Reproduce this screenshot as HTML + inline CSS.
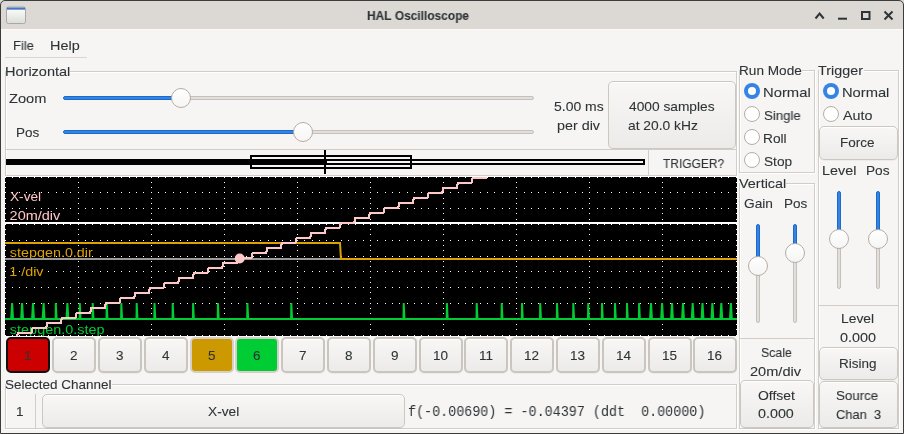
<!DOCTYPE html>
<html><head><meta charset="utf-8"><style>
html,body{margin:0;padding:0;}
body{width:904px;height:434px;position:relative;overflow:hidden;background:#3c3c3c;font-family:'Liberation Sans', sans-serif;}
.t{position:absolute;white-space:pre;transform-origin:0 0;will-change:transform;-webkit-text-stroke:0.1px currentColor;}
.b{position:absolute;}
</style></head><body>
<div class="b" style="left:0px;top:0px;width:904px;height:434px;background:#f6f5f4;"></div><div class="b" style="left:0px;top:0px;width:904px;height:29px;background:#dcd8d4;"></div><div class="b" style="left:0px;top:29px;width:904px;height:1px;background:#fbfaf9;"></div><div class="t" style="left:367.23px;top:10.02px;font-size:12.5px;line-height:12.5px;color:#2e3436;font-family:'Liberation Sans', sans-serif;font-weight:bold;transform:scaleX(0.9536);">HAL&#160;Oscilloscope</div><div class="t" style="left:12.71px;top:39.00px;font-size:13.5px;line-height:13.5px;color:#2e3436;font-family:'Liberation Sans', sans-serif;transform:scaleX(0.9602);">File</div><div class="t" style="left:49.75px;top:39.00px;font-size:13.5px;line-height:13.5px;color:#2e3436;font-family:'Liberation Sans', sans-serif;transform:scaleX(1.0680);">Help</div><div class="b" style="left:5px;top:57px;width:82px;height:1px;background:#dad5d1;"></div><div class="b" style="left:6px;top:72px;width:732px;height:105px;border:1px solid #ffffff;box-sizing:border-box;"></div><div class="b" style="left:5px;top:71px;width:732px;height:105px;border:1px solid #d3cdc8;box-sizing:border-box;"></div><div class="b" style="left:6px;top:69px;width:64px;height:5px;background:#f6f5f4;"></div><div class="t" style="left:4.64px;top:65.00px;font-size:13.5px;line-height:13.5px;color:#2e3436;font-family:'Liberation Sans', sans-serif;transform:scaleX(1.0750);">Horizontal</div><div class="t" style="left:8.66px;top:92.00px;font-size:13.5px;line-height:13.5px;color:#2e3436;font-family:'Liberation Sans', sans-serif;transform:scaleX(1.0818);">Zoom</div><div class="t" style="left:15.74px;top:126.00px;font-size:13.5px;line-height:13.5px;color:#2e3436;font-family:'Liberation Sans', sans-serif;transform:scaleX(0.9846);">Pos</div><div class="b" style="left:63px;top:96px;width:122px;height:4px;background:#3584e4;border:1px solid #1b6acb;border-radius:2px;box-sizing:border-box;"></div><div class="b" style="left:185px;top:96px;width:349px;height:4px;background:#e1dedb;border:1px solid #c6c0ba;border-radius:2px;box-sizing:border-box;"></div><div class="b" style="left:171px;top:88px;width:20px;height:20px;border-radius:50%;background:linear-gradient(#ffffff,#f6f5f4);border:1px solid #b6ada5;box-sizing:border-box;"></div><div class="b" style="left:63px;top:130px;width:244px;height:4px;background:#3584e4;border:1px solid #1b6acb;border-radius:2px;box-sizing:border-box;"></div><div class="b" style="left:307px;top:130px;width:227px;height:4px;background:#e1dedb;border:1px solid #c6c0ba;border-radius:2px;box-sizing:border-box;"></div><div class="b" style="left:293px;top:122px;width:20px;height:20px;border-radius:50%;background:linear-gradient(#ffffff,#f6f5f4);border:1px solid #b6ada5;box-sizing:border-box;"></div><div class="t" style="left:553.84px;top:100.00px;font-size:13.5px;line-height:13.5px;color:#2e3436;font-family:'Liberation Sans', sans-serif;transform:scaleX(1.0345);">5.00&#160;ms</div><div class="t" style="left:556.77px;top:119.00px;font-size:13.5px;line-height:13.5px;color:#2e3436;font-family:'Liberation Sans', sans-serif;transform:scaleX(1.0618);">per&#160;div</div><div class="b" style="left:608px;top:81px;width:128px;height:68px;border:1px solid #cdc7c2;border-radius:5px;box-sizing:border-box;background:linear-gradient(#f8f7f6,#edebe9);box-shadow:inset 0 1px rgba(255,255,255,0.9), 0 1px rgba(0,0,0,0.04);"></div><div class="t" style="left:628.63px;top:100.00px;font-size:13.5px;line-height:13.5px;color:#2e3436;font-family:'Liberation Sans', sans-serif;transform:scaleX(1.0181);">4000&#160;samples</div><div class="t" style="left:628.35px;top:119.00px;font-size:13.5px;line-height:13.5px;color:#2e3436;font-family:'Liberation Sans', sans-serif;transform:scaleX(1.0224);">at&#160;20.0&#160;kHz</div><div class="b" style="left:6px;top:149px;width:730px;height:1px;background:#d3cdc8;"></div><div class="b" style="left:648px;top:150px;width:1px;height:25px;background:#d3cdc8;"></div><div class="t" style="left:662.86px;top:157.00px;font-size:13.5px;line-height:13.5px;color:#2e3436;font-family:'Liberation Sans', sans-serif;transform:scaleX(0.8865);">TRIGGER?</div><div class="b" style="left:6px;top:159px;width:319px;height:6px;background:#000;"></div><div class="b" style="left:325px;top:159px;width:320px;height:6px;border:2px solid #000;box-sizing:border-box;"></div><div class="b" style="left:250px;top:155px;width:162px;height:14px;border:2px solid #000;box-sizing:border-box;"></div><div class="b" style="left:324px;top:150px;width:2px;height:24px;background:#000;"></div><svg class="b" style="left:5px;top:177px;will-change:transform" width="732" height="159" viewBox="0 0 732 159" shape-rendering="crispEdges"><rect width="732" height="159" fill="#000"/><path d="M0 0h1v1h-1zM0 5h1v1h-1zM0 10h1v1h-1zM0 15h1v1h-1zM0 21h1v1h-1zM0 26h1v1h-1zM0 31h1v1h-1zM0 36h1v1h-1zM0 42h1v1h-1zM0 47h1v1h-1zM0 52h1v1h-1zM0 57h1v1h-1zM0 63h1v1h-1zM0 68h1v1h-1zM0 73h1v1h-1zM0 79h1v1h-1zM0 84h1v1h-1zM0 89h1v1h-1zM0 94h1v1h-1zM0 100h1v1h-1zM0 105h1v1h-1zM0 110h1v1h-1zM0 115h1v1h-1zM0 121h1v1h-1zM0 126h1v1h-1zM0 131h1v1h-1zM0 136h1v1h-1zM0 142h1v1h-1zM0 147h1v1h-1zM0 152h1v1h-1zM0 158h1v1h-1zM7 0h1v1h-1zM7 15h1v1h-1zM7 31h1v1h-1zM7 47h1v1h-1zM7 63h1v1h-1zM7 79h1v1h-1zM7 94h1v1h-1zM7 110h1v1h-1zM7 126h1v1h-1zM7 142h1v1h-1zM7 158h1v1h-1zM14 0h1v1h-1zM14 15h1v1h-1zM14 31h1v1h-1zM14 47h1v1h-1zM14 63h1v1h-1zM14 79h1v1h-1zM14 94h1v1h-1zM14 110h1v1h-1zM14 126h1v1h-1zM14 142h1v1h-1zM14 158h1v1h-1zM21 0h1v1h-1zM21 15h1v1h-1zM21 31h1v1h-1zM21 47h1v1h-1zM21 63h1v1h-1zM21 79h1v1h-1zM21 94h1v1h-1zM21 110h1v1h-1zM21 126h1v1h-1zM21 142h1v1h-1zM21 158h1v1h-1zM29 0h1v1h-1zM29 15h1v1h-1zM29 31h1v1h-1zM29 47h1v1h-1zM29 63h1v1h-1zM29 79h1v1h-1zM29 94h1v1h-1zM29 110h1v1h-1zM29 126h1v1h-1zM29 142h1v1h-1zM29 158h1v1h-1zM36 0h1v1h-1zM36 15h1v1h-1zM36 31h1v1h-1zM36 47h1v1h-1zM36 63h1v1h-1zM36 79h1v1h-1zM36 94h1v1h-1zM36 110h1v1h-1zM36 126h1v1h-1zM36 142h1v1h-1zM36 158h1v1h-1zM43 0h1v1h-1zM43 15h1v1h-1zM43 31h1v1h-1zM43 47h1v1h-1zM43 63h1v1h-1zM43 79h1v1h-1zM43 94h1v1h-1zM43 110h1v1h-1zM43 126h1v1h-1zM43 142h1v1h-1zM43 158h1v1h-1zM51 0h1v1h-1zM51 15h1v1h-1zM51 31h1v1h-1zM51 47h1v1h-1zM51 63h1v1h-1zM51 79h1v1h-1zM51 94h1v1h-1zM51 110h1v1h-1zM51 126h1v1h-1zM51 142h1v1h-1zM51 158h1v1h-1zM58 0h1v1h-1zM58 15h1v1h-1zM58 31h1v1h-1zM58 47h1v1h-1zM58 63h1v1h-1zM58 79h1v1h-1zM58 94h1v1h-1zM58 110h1v1h-1zM58 126h1v1h-1zM58 142h1v1h-1zM58 158h1v1h-1zM65 0h1v1h-1zM65 15h1v1h-1zM65 31h1v1h-1zM65 47h1v1h-1zM65 63h1v1h-1zM65 79h1v1h-1zM65 94h1v1h-1zM65 110h1v1h-1zM65 126h1v1h-1zM65 142h1v1h-1zM65 158h1v1h-1zM73 0h1v1h-1zM73 5h1v1h-1zM73 10h1v1h-1zM73 15h1v1h-1zM73 21h1v1h-1zM73 26h1v1h-1zM73 31h1v1h-1zM73 36h1v1h-1zM73 42h1v1h-1zM73 47h1v1h-1zM73 52h1v1h-1zM73 57h1v1h-1zM73 63h1v1h-1zM73 68h1v1h-1zM73 73h1v1h-1zM73 79h1v1h-1zM73 84h1v1h-1zM73 89h1v1h-1zM73 94h1v1h-1zM73 100h1v1h-1zM73 105h1v1h-1zM73 110h1v1h-1zM73 115h1v1h-1zM73 121h1v1h-1zM73 126h1v1h-1zM73 131h1v1h-1zM73 136h1v1h-1zM73 142h1v1h-1zM73 147h1v1h-1zM73 152h1v1h-1zM73 158h1v1h-1zM80 0h1v1h-1zM80 15h1v1h-1zM80 31h1v1h-1zM80 47h1v1h-1zM80 63h1v1h-1zM80 79h1v1h-1zM80 94h1v1h-1zM80 110h1v1h-1zM80 126h1v1h-1zM80 142h1v1h-1zM80 158h1v1h-1zM87 0h1v1h-1zM87 15h1v1h-1zM87 31h1v1h-1zM87 47h1v1h-1zM87 63h1v1h-1zM87 79h1v1h-1zM87 94h1v1h-1zM87 110h1v1h-1zM87 126h1v1h-1zM87 142h1v1h-1zM87 158h1v1h-1zM95 0h1v1h-1zM95 15h1v1h-1zM95 31h1v1h-1zM95 47h1v1h-1zM95 63h1v1h-1zM95 79h1v1h-1zM95 94h1v1h-1zM95 110h1v1h-1zM95 126h1v1h-1zM95 142h1v1h-1zM95 158h1v1h-1zM102 0h1v1h-1zM102 15h1v1h-1zM102 31h1v1h-1zM102 47h1v1h-1zM102 63h1v1h-1zM102 79h1v1h-1zM102 94h1v1h-1zM102 110h1v1h-1zM102 126h1v1h-1zM102 142h1v1h-1zM102 158h1v1h-1zM109 0h1v1h-1zM109 15h1v1h-1zM109 31h1v1h-1zM109 47h1v1h-1zM109 63h1v1h-1zM109 79h1v1h-1zM109 94h1v1h-1zM109 110h1v1h-1zM109 126h1v1h-1zM109 142h1v1h-1zM109 158h1v1h-1zM116 0h1v1h-1zM116 15h1v1h-1zM116 31h1v1h-1zM116 47h1v1h-1zM116 63h1v1h-1zM116 79h1v1h-1zM116 94h1v1h-1zM116 110h1v1h-1zM116 126h1v1h-1zM116 142h1v1h-1zM116 158h1v1h-1zM124 0h1v1h-1zM124 15h1v1h-1zM124 31h1v1h-1zM124 47h1v1h-1zM124 63h1v1h-1zM124 79h1v1h-1zM124 94h1v1h-1zM124 110h1v1h-1zM124 126h1v1h-1zM124 142h1v1h-1zM124 158h1v1h-1zM131 0h1v1h-1zM131 15h1v1h-1zM131 31h1v1h-1zM131 47h1v1h-1zM131 63h1v1h-1zM131 79h1v1h-1zM131 94h1v1h-1zM131 110h1v1h-1zM131 126h1v1h-1zM131 142h1v1h-1zM131 158h1v1h-1zM138 0h1v1h-1zM138 15h1v1h-1zM138 31h1v1h-1zM138 47h1v1h-1zM138 63h1v1h-1zM138 79h1v1h-1zM138 94h1v1h-1zM138 110h1v1h-1zM138 126h1v1h-1zM138 142h1v1h-1zM138 158h1v1h-1zM146 0h1v1h-1zM146 5h1v1h-1zM146 10h1v1h-1zM146 15h1v1h-1zM146 21h1v1h-1zM146 26h1v1h-1zM146 31h1v1h-1zM146 36h1v1h-1zM146 42h1v1h-1zM146 47h1v1h-1zM146 52h1v1h-1zM146 57h1v1h-1zM146 63h1v1h-1zM146 68h1v1h-1zM146 73h1v1h-1zM146 79h1v1h-1zM146 84h1v1h-1zM146 89h1v1h-1zM146 94h1v1h-1zM146 100h1v1h-1zM146 105h1v1h-1zM146 110h1v1h-1zM146 115h1v1h-1zM146 121h1v1h-1zM146 126h1v1h-1zM146 131h1v1h-1zM146 136h1v1h-1zM146 142h1v1h-1zM146 147h1v1h-1zM146 152h1v1h-1zM146 158h1v1h-1zM153 0h1v1h-1zM153 15h1v1h-1zM153 31h1v1h-1zM153 47h1v1h-1zM153 63h1v1h-1zM153 79h1v1h-1zM153 94h1v1h-1zM153 110h1v1h-1zM153 126h1v1h-1zM153 142h1v1h-1zM153 158h1v1h-1zM160 0h1v1h-1zM160 15h1v1h-1zM160 31h1v1h-1zM160 47h1v1h-1zM160 63h1v1h-1zM160 79h1v1h-1zM160 94h1v1h-1zM160 110h1v1h-1zM160 126h1v1h-1zM160 142h1v1h-1zM160 158h1v1h-1zM168 0h1v1h-1zM168 15h1v1h-1zM168 31h1v1h-1zM168 47h1v1h-1zM168 63h1v1h-1zM168 79h1v1h-1zM168 94h1v1h-1zM168 110h1v1h-1zM168 126h1v1h-1zM168 142h1v1h-1zM168 158h1v1h-1zM175 0h1v1h-1zM175 15h1v1h-1zM175 31h1v1h-1zM175 47h1v1h-1zM175 63h1v1h-1zM175 79h1v1h-1zM175 94h1v1h-1zM175 110h1v1h-1zM175 126h1v1h-1zM175 142h1v1h-1zM175 158h1v1h-1zM182 0h1v1h-1zM182 15h1v1h-1zM182 31h1v1h-1zM182 47h1v1h-1zM182 63h1v1h-1zM182 79h1v1h-1zM182 94h1v1h-1zM182 110h1v1h-1zM182 126h1v1h-1zM182 142h1v1h-1zM182 158h1v1h-1zM190 0h1v1h-1zM190 15h1v1h-1zM190 31h1v1h-1zM190 47h1v1h-1zM190 63h1v1h-1zM190 79h1v1h-1zM190 94h1v1h-1zM190 110h1v1h-1zM190 126h1v1h-1zM190 142h1v1h-1zM190 158h1v1h-1zM197 0h1v1h-1zM197 15h1v1h-1zM197 31h1v1h-1zM197 47h1v1h-1zM197 63h1v1h-1zM197 79h1v1h-1zM197 94h1v1h-1zM197 110h1v1h-1zM197 126h1v1h-1zM197 142h1v1h-1zM197 158h1v1h-1zM204 0h1v1h-1zM204 15h1v1h-1zM204 31h1v1h-1zM204 47h1v1h-1zM204 63h1v1h-1zM204 79h1v1h-1zM204 94h1v1h-1zM204 110h1v1h-1zM204 126h1v1h-1zM204 142h1v1h-1zM204 158h1v1h-1zM211 0h1v1h-1zM211 15h1v1h-1zM211 31h1v1h-1zM211 47h1v1h-1zM211 63h1v1h-1zM211 79h1v1h-1zM211 94h1v1h-1zM211 110h1v1h-1zM211 126h1v1h-1zM211 142h1v1h-1zM211 158h1v1h-1zM219 0h1v1h-1zM219 5h1v1h-1zM219 10h1v1h-1zM219 15h1v1h-1zM219 21h1v1h-1zM219 26h1v1h-1zM219 31h1v1h-1zM219 36h1v1h-1zM219 42h1v1h-1zM219 47h1v1h-1zM219 52h1v1h-1zM219 57h1v1h-1zM219 63h1v1h-1zM219 68h1v1h-1zM219 73h1v1h-1zM219 79h1v1h-1zM219 84h1v1h-1zM219 89h1v1h-1zM219 94h1v1h-1zM219 100h1v1h-1zM219 105h1v1h-1zM219 110h1v1h-1zM219 115h1v1h-1zM219 121h1v1h-1zM219 126h1v1h-1zM219 131h1v1h-1zM219 136h1v1h-1zM219 142h1v1h-1zM219 147h1v1h-1zM219 152h1v1h-1zM219 158h1v1h-1zM226 0h1v1h-1zM226 15h1v1h-1zM226 31h1v1h-1zM226 47h1v1h-1zM226 63h1v1h-1zM226 79h1v1h-1zM226 94h1v1h-1zM226 110h1v1h-1zM226 126h1v1h-1zM226 142h1v1h-1zM226 158h1v1h-1zM233 0h1v1h-1zM233 15h1v1h-1zM233 31h1v1h-1zM233 47h1v1h-1zM233 63h1v1h-1zM233 79h1v1h-1zM233 94h1v1h-1zM233 110h1v1h-1zM233 126h1v1h-1zM233 142h1v1h-1zM233 158h1v1h-1zM241 0h1v1h-1zM241 15h1v1h-1zM241 31h1v1h-1zM241 47h1v1h-1zM241 63h1v1h-1zM241 79h1v1h-1zM241 94h1v1h-1zM241 110h1v1h-1zM241 126h1v1h-1zM241 142h1v1h-1zM241 158h1v1h-1zM248 0h1v1h-1zM248 15h1v1h-1zM248 31h1v1h-1zM248 47h1v1h-1zM248 63h1v1h-1zM248 79h1v1h-1zM248 94h1v1h-1zM248 110h1v1h-1zM248 126h1v1h-1zM248 142h1v1h-1zM248 158h1v1h-1zM255 0h1v1h-1zM255 15h1v1h-1zM255 31h1v1h-1zM255 47h1v1h-1zM255 63h1v1h-1zM255 79h1v1h-1zM255 94h1v1h-1zM255 110h1v1h-1zM255 126h1v1h-1zM255 142h1v1h-1zM255 158h1v1h-1zM263 0h1v1h-1zM263 15h1v1h-1zM263 31h1v1h-1zM263 47h1v1h-1zM263 63h1v1h-1zM263 79h1v1h-1zM263 94h1v1h-1zM263 110h1v1h-1zM263 126h1v1h-1zM263 142h1v1h-1zM263 158h1v1h-1zM270 0h1v1h-1zM270 15h1v1h-1zM270 31h1v1h-1zM270 47h1v1h-1zM270 63h1v1h-1zM270 79h1v1h-1zM270 94h1v1h-1zM270 110h1v1h-1zM270 126h1v1h-1zM270 142h1v1h-1zM270 158h1v1h-1zM277 0h1v1h-1zM277 15h1v1h-1zM277 31h1v1h-1zM277 47h1v1h-1zM277 63h1v1h-1zM277 79h1v1h-1zM277 94h1v1h-1zM277 110h1v1h-1zM277 126h1v1h-1zM277 142h1v1h-1zM277 158h1v1h-1zM285 0h1v1h-1zM285 15h1v1h-1zM285 31h1v1h-1zM285 47h1v1h-1zM285 63h1v1h-1zM285 79h1v1h-1zM285 94h1v1h-1zM285 110h1v1h-1zM285 126h1v1h-1zM285 142h1v1h-1zM285 158h1v1h-1zM292 0h1v1h-1zM292 5h1v1h-1zM292 10h1v1h-1zM292 15h1v1h-1zM292 21h1v1h-1zM292 26h1v1h-1zM292 31h1v1h-1zM292 36h1v1h-1zM292 42h1v1h-1zM292 47h1v1h-1zM292 52h1v1h-1zM292 57h1v1h-1zM292 63h1v1h-1zM292 68h1v1h-1zM292 73h1v1h-1zM292 79h1v1h-1zM292 84h1v1h-1zM292 89h1v1h-1zM292 94h1v1h-1zM292 100h1v1h-1zM292 105h1v1h-1zM292 110h1v1h-1zM292 115h1v1h-1zM292 121h1v1h-1zM292 126h1v1h-1zM292 131h1v1h-1zM292 136h1v1h-1zM292 142h1v1h-1zM292 147h1v1h-1zM292 152h1v1h-1zM292 158h1v1h-1zM299 0h1v1h-1zM299 15h1v1h-1zM299 31h1v1h-1zM299 47h1v1h-1zM299 63h1v1h-1zM299 79h1v1h-1zM299 94h1v1h-1zM299 110h1v1h-1zM299 126h1v1h-1zM299 142h1v1h-1zM299 158h1v1h-1zM307 0h1v1h-1zM307 15h1v1h-1zM307 31h1v1h-1zM307 47h1v1h-1zM307 63h1v1h-1zM307 79h1v1h-1zM307 94h1v1h-1zM307 110h1v1h-1zM307 126h1v1h-1zM307 142h1v1h-1zM307 158h1v1h-1zM314 0h1v1h-1zM314 15h1v1h-1zM314 31h1v1h-1zM314 47h1v1h-1zM314 63h1v1h-1zM314 79h1v1h-1zM314 94h1v1h-1zM314 110h1v1h-1zM314 126h1v1h-1zM314 142h1v1h-1zM314 158h1v1h-1zM321 0h1v1h-1zM321 15h1v1h-1zM321 31h1v1h-1zM321 47h1v1h-1zM321 63h1v1h-1zM321 79h1v1h-1zM321 94h1v1h-1zM321 110h1v1h-1zM321 126h1v1h-1zM321 142h1v1h-1zM321 158h1v1h-1zM328 0h1v1h-1zM328 15h1v1h-1zM328 31h1v1h-1zM328 47h1v1h-1zM328 63h1v1h-1zM328 79h1v1h-1zM328 94h1v1h-1zM328 110h1v1h-1zM328 126h1v1h-1zM328 142h1v1h-1zM328 158h1v1h-1zM336 0h1v1h-1zM336 15h1v1h-1zM336 31h1v1h-1zM336 47h1v1h-1zM336 63h1v1h-1zM336 79h1v1h-1zM336 94h1v1h-1zM336 110h1v1h-1zM336 126h1v1h-1zM336 142h1v1h-1zM336 158h1v1h-1zM343 0h1v1h-1zM343 15h1v1h-1zM343 31h1v1h-1zM343 47h1v1h-1zM343 63h1v1h-1zM343 79h1v1h-1zM343 94h1v1h-1zM343 110h1v1h-1zM343 126h1v1h-1zM343 142h1v1h-1zM343 158h1v1h-1zM350 0h1v1h-1zM350 15h1v1h-1zM350 31h1v1h-1zM350 47h1v1h-1zM350 63h1v1h-1zM350 79h1v1h-1zM350 94h1v1h-1zM350 110h1v1h-1zM350 126h1v1h-1zM350 142h1v1h-1zM350 158h1v1h-1zM358 0h1v1h-1zM358 15h1v1h-1zM358 31h1v1h-1zM358 47h1v1h-1zM358 63h1v1h-1zM358 79h1v1h-1zM358 94h1v1h-1zM358 110h1v1h-1zM358 126h1v1h-1zM358 142h1v1h-1zM358 158h1v1h-1zM365 0h1v1h-1zM365 5h1v1h-1zM365 10h1v1h-1zM365 15h1v1h-1zM365 21h1v1h-1zM365 26h1v1h-1zM365 31h1v1h-1zM365 36h1v1h-1zM365 42h1v1h-1zM365 47h1v1h-1zM365 52h1v1h-1zM365 57h1v1h-1zM365 63h1v1h-1zM365 68h1v1h-1zM365 73h1v1h-1zM365 79h1v1h-1zM365 84h1v1h-1zM365 89h1v1h-1zM365 94h1v1h-1zM365 100h1v1h-1zM365 105h1v1h-1zM365 110h1v1h-1zM365 115h1v1h-1zM365 121h1v1h-1zM365 126h1v1h-1zM365 131h1v1h-1zM365 136h1v1h-1zM365 142h1v1h-1zM365 147h1v1h-1zM365 152h1v1h-1zM365 158h1v1h-1zM372 0h1v1h-1zM372 15h1v1h-1zM372 31h1v1h-1zM372 47h1v1h-1zM372 63h1v1h-1zM372 79h1v1h-1zM372 94h1v1h-1zM372 110h1v1h-1zM372 126h1v1h-1zM372 142h1v1h-1zM372 158h1v1h-1zM380 0h1v1h-1zM380 15h1v1h-1zM380 31h1v1h-1zM380 47h1v1h-1zM380 63h1v1h-1zM380 79h1v1h-1zM380 94h1v1h-1zM380 110h1v1h-1zM380 126h1v1h-1zM380 142h1v1h-1zM380 158h1v1h-1zM387 0h1v1h-1zM387 15h1v1h-1zM387 31h1v1h-1zM387 47h1v1h-1zM387 63h1v1h-1zM387 79h1v1h-1zM387 94h1v1h-1zM387 110h1v1h-1zM387 126h1v1h-1zM387 142h1v1h-1zM387 158h1v1h-1zM394 0h1v1h-1zM394 15h1v1h-1zM394 31h1v1h-1zM394 47h1v1h-1zM394 63h1v1h-1zM394 79h1v1h-1zM394 94h1v1h-1zM394 110h1v1h-1zM394 126h1v1h-1zM394 142h1v1h-1zM394 158h1v1h-1zM402 0h1v1h-1zM402 15h1v1h-1zM402 31h1v1h-1zM402 47h1v1h-1zM402 63h1v1h-1zM402 79h1v1h-1zM402 94h1v1h-1zM402 110h1v1h-1zM402 126h1v1h-1zM402 142h1v1h-1zM402 158h1v1h-1zM409 0h1v1h-1zM409 15h1v1h-1zM409 31h1v1h-1zM409 47h1v1h-1zM409 63h1v1h-1zM409 79h1v1h-1zM409 94h1v1h-1zM409 110h1v1h-1zM409 126h1v1h-1zM409 142h1v1h-1zM409 158h1v1h-1zM416 0h1v1h-1zM416 15h1v1h-1zM416 31h1v1h-1zM416 47h1v1h-1zM416 63h1v1h-1zM416 79h1v1h-1zM416 94h1v1h-1zM416 110h1v1h-1zM416 126h1v1h-1zM416 142h1v1h-1zM416 158h1v1h-1zM423 0h1v1h-1zM423 15h1v1h-1zM423 31h1v1h-1zM423 47h1v1h-1zM423 63h1v1h-1zM423 79h1v1h-1zM423 94h1v1h-1zM423 110h1v1h-1zM423 126h1v1h-1zM423 142h1v1h-1zM423 158h1v1h-1zM431 0h1v1h-1zM431 15h1v1h-1zM431 31h1v1h-1zM431 47h1v1h-1zM431 63h1v1h-1zM431 79h1v1h-1zM431 94h1v1h-1zM431 110h1v1h-1zM431 126h1v1h-1zM431 142h1v1h-1zM431 158h1v1h-1zM438 0h1v1h-1zM438 5h1v1h-1zM438 10h1v1h-1zM438 15h1v1h-1zM438 21h1v1h-1zM438 26h1v1h-1zM438 31h1v1h-1zM438 36h1v1h-1zM438 42h1v1h-1zM438 47h1v1h-1zM438 52h1v1h-1zM438 57h1v1h-1zM438 63h1v1h-1zM438 68h1v1h-1zM438 73h1v1h-1zM438 79h1v1h-1zM438 84h1v1h-1zM438 89h1v1h-1zM438 94h1v1h-1zM438 100h1v1h-1zM438 105h1v1h-1zM438 110h1v1h-1zM438 115h1v1h-1zM438 121h1v1h-1zM438 126h1v1h-1zM438 131h1v1h-1zM438 136h1v1h-1zM438 142h1v1h-1zM438 147h1v1h-1zM438 152h1v1h-1zM438 158h1v1h-1zM445 0h1v1h-1zM445 15h1v1h-1zM445 31h1v1h-1zM445 47h1v1h-1zM445 63h1v1h-1zM445 79h1v1h-1zM445 94h1v1h-1zM445 110h1v1h-1zM445 126h1v1h-1zM445 142h1v1h-1zM445 158h1v1h-1zM453 0h1v1h-1zM453 15h1v1h-1zM453 31h1v1h-1zM453 47h1v1h-1zM453 63h1v1h-1zM453 79h1v1h-1zM453 94h1v1h-1zM453 110h1v1h-1zM453 126h1v1h-1zM453 142h1v1h-1zM453 158h1v1h-1zM460 0h1v1h-1zM460 15h1v1h-1zM460 31h1v1h-1zM460 47h1v1h-1zM460 63h1v1h-1zM460 79h1v1h-1zM460 94h1v1h-1zM460 110h1v1h-1zM460 126h1v1h-1zM460 142h1v1h-1zM460 158h1v1h-1zM467 0h1v1h-1zM467 15h1v1h-1zM467 31h1v1h-1zM467 47h1v1h-1zM467 63h1v1h-1zM467 79h1v1h-1zM467 94h1v1h-1zM467 110h1v1h-1zM467 126h1v1h-1zM467 142h1v1h-1zM467 158h1v1h-1zM475 0h1v1h-1zM475 15h1v1h-1zM475 31h1v1h-1zM475 47h1v1h-1zM475 63h1v1h-1zM475 79h1v1h-1zM475 94h1v1h-1zM475 110h1v1h-1zM475 126h1v1h-1zM475 142h1v1h-1zM475 158h1v1h-1zM482 0h1v1h-1zM482 15h1v1h-1zM482 31h1v1h-1zM482 47h1v1h-1zM482 63h1v1h-1zM482 79h1v1h-1zM482 94h1v1h-1zM482 110h1v1h-1zM482 126h1v1h-1zM482 142h1v1h-1zM482 158h1v1h-1zM489 0h1v1h-1zM489 15h1v1h-1zM489 31h1v1h-1zM489 47h1v1h-1zM489 63h1v1h-1zM489 79h1v1h-1zM489 94h1v1h-1zM489 110h1v1h-1zM489 126h1v1h-1zM489 142h1v1h-1zM489 158h1v1h-1zM497 0h1v1h-1zM497 15h1v1h-1zM497 31h1v1h-1zM497 47h1v1h-1zM497 63h1v1h-1zM497 79h1v1h-1zM497 94h1v1h-1zM497 110h1v1h-1zM497 126h1v1h-1zM497 142h1v1h-1zM497 158h1v1h-1zM504 0h1v1h-1zM504 15h1v1h-1zM504 31h1v1h-1zM504 47h1v1h-1zM504 63h1v1h-1zM504 79h1v1h-1zM504 94h1v1h-1zM504 110h1v1h-1zM504 126h1v1h-1zM504 142h1v1h-1zM504 158h1v1h-1zM511 0h1v1h-1zM511 5h1v1h-1zM511 10h1v1h-1zM511 15h1v1h-1zM511 21h1v1h-1zM511 26h1v1h-1zM511 31h1v1h-1zM511 36h1v1h-1zM511 42h1v1h-1zM511 47h1v1h-1zM511 52h1v1h-1zM511 57h1v1h-1zM511 63h1v1h-1zM511 68h1v1h-1zM511 73h1v1h-1zM511 79h1v1h-1zM511 84h1v1h-1zM511 89h1v1h-1zM511 94h1v1h-1zM511 100h1v1h-1zM511 105h1v1h-1zM511 110h1v1h-1zM511 115h1v1h-1zM511 121h1v1h-1zM511 126h1v1h-1zM511 131h1v1h-1zM511 136h1v1h-1zM511 142h1v1h-1zM511 147h1v1h-1zM511 152h1v1h-1zM511 158h1v1h-1zM519 0h1v1h-1zM519 15h1v1h-1zM519 31h1v1h-1zM519 47h1v1h-1zM519 63h1v1h-1zM519 79h1v1h-1zM519 94h1v1h-1zM519 110h1v1h-1zM519 126h1v1h-1zM519 142h1v1h-1zM519 158h1v1h-1zM526 0h1v1h-1zM526 15h1v1h-1zM526 31h1v1h-1zM526 47h1v1h-1zM526 63h1v1h-1zM526 79h1v1h-1zM526 94h1v1h-1zM526 110h1v1h-1zM526 126h1v1h-1zM526 142h1v1h-1zM526 158h1v1h-1zM533 0h1v1h-1zM533 15h1v1h-1zM533 31h1v1h-1zM533 47h1v1h-1zM533 63h1v1h-1zM533 79h1v1h-1zM533 94h1v1h-1zM533 110h1v1h-1zM533 126h1v1h-1zM533 142h1v1h-1zM533 158h1v1h-1zM540 0h1v1h-1zM540 15h1v1h-1zM540 31h1v1h-1zM540 47h1v1h-1zM540 63h1v1h-1zM540 79h1v1h-1zM540 94h1v1h-1zM540 110h1v1h-1zM540 126h1v1h-1zM540 142h1v1h-1zM540 158h1v1h-1zM548 0h1v1h-1zM548 15h1v1h-1zM548 31h1v1h-1zM548 47h1v1h-1zM548 63h1v1h-1zM548 79h1v1h-1zM548 94h1v1h-1zM548 110h1v1h-1zM548 126h1v1h-1zM548 142h1v1h-1zM548 158h1v1h-1zM555 0h1v1h-1zM555 15h1v1h-1zM555 31h1v1h-1zM555 47h1v1h-1zM555 63h1v1h-1zM555 79h1v1h-1zM555 94h1v1h-1zM555 110h1v1h-1zM555 126h1v1h-1zM555 142h1v1h-1zM555 158h1v1h-1zM562 0h1v1h-1zM562 15h1v1h-1zM562 31h1v1h-1zM562 47h1v1h-1zM562 63h1v1h-1zM562 79h1v1h-1zM562 94h1v1h-1zM562 110h1v1h-1zM562 126h1v1h-1zM562 142h1v1h-1zM562 158h1v1h-1zM570 0h1v1h-1zM570 15h1v1h-1zM570 31h1v1h-1zM570 47h1v1h-1zM570 63h1v1h-1zM570 79h1v1h-1zM570 94h1v1h-1zM570 110h1v1h-1zM570 126h1v1h-1zM570 142h1v1h-1zM570 158h1v1h-1zM577 0h1v1h-1zM577 15h1v1h-1zM577 31h1v1h-1zM577 47h1v1h-1zM577 63h1v1h-1zM577 79h1v1h-1zM577 94h1v1h-1zM577 110h1v1h-1zM577 126h1v1h-1zM577 142h1v1h-1zM577 158h1v1h-1zM584 0h1v1h-1zM584 5h1v1h-1zM584 10h1v1h-1zM584 15h1v1h-1zM584 21h1v1h-1zM584 26h1v1h-1zM584 31h1v1h-1zM584 36h1v1h-1zM584 42h1v1h-1zM584 47h1v1h-1zM584 52h1v1h-1zM584 57h1v1h-1zM584 63h1v1h-1zM584 68h1v1h-1zM584 73h1v1h-1zM584 79h1v1h-1zM584 84h1v1h-1zM584 89h1v1h-1zM584 94h1v1h-1zM584 100h1v1h-1zM584 105h1v1h-1zM584 110h1v1h-1zM584 115h1v1h-1zM584 121h1v1h-1zM584 126h1v1h-1zM584 131h1v1h-1zM584 136h1v1h-1zM584 142h1v1h-1zM584 147h1v1h-1zM584 152h1v1h-1zM584 158h1v1h-1zM592 0h1v1h-1zM592 15h1v1h-1zM592 31h1v1h-1zM592 47h1v1h-1zM592 63h1v1h-1zM592 79h1v1h-1zM592 94h1v1h-1zM592 110h1v1h-1zM592 126h1v1h-1zM592 142h1v1h-1zM592 158h1v1h-1zM599 0h1v1h-1zM599 15h1v1h-1zM599 31h1v1h-1zM599 47h1v1h-1zM599 63h1v1h-1zM599 79h1v1h-1zM599 94h1v1h-1zM599 110h1v1h-1zM599 126h1v1h-1zM599 142h1v1h-1zM599 158h1v1h-1zM606 0h1v1h-1zM606 15h1v1h-1zM606 31h1v1h-1zM606 47h1v1h-1zM606 63h1v1h-1zM606 79h1v1h-1zM606 94h1v1h-1zM606 110h1v1h-1zM606 126h1v1h-1zM606 142h1v1h-1zM606 158h1v1h-1zM614 0h1v1h-1zM614 15h1v1h-1zM614 31h1v1h-1zM614 47h1v1h-1zM614 63h1v1h-1zM614 79h1v1h-1zM614 94h1v1h-1zM614 110h1v1h-1zM614 126h1v1h-1zM614 142h1v1h-1zM614 158h1v1h-1zM621 0h1v1h-1zM621 15h1v1h-1zM621 31h1v1h-1zM621 47h1v1h-1zM621 63h1v1h-1zM621 79h1v1h-1zM621 94h1v1h-1zM621 110h1v1h-1zM621 126h1v1h-1zM621 142h1v1h-1zM621 158h1v1h-1zM628 0h1v1h-1zM628 15h1v1h-1zM628 31h1v1h-1zM628 47h1v1h-1zM628 63h1v1h-1zM628 79h1v1h-1zM628 94h1v1h-1zM628 110h1v1h-1zM628 126h1v1h-1zM628 142h1v1h-1zM628 158h1v1h-1zM635 0h1v1h-1zM635 15h1v1h-1zM635 31h1v1h-1zM635 47h1v1h-1zM635 63h1v1h-1zM635 79h1v1h-1zM635 94h1v1h-1zM635 110h1v1h-1zM635 126h1v1h-1zM635 142h1v1h-1zM635 158h1v1h-1zM643 0h1v1h-1zM643 15h1v1h-1zM643 31h1v1h-1zM643 47h1v1h-1zM643 63h1v1h-1zM643 79h1v1h-1zM643 94h1v1h-1zM643 110h1v1h-1zM643 126h1v1h-1zM643 142h1v1h-1zM643 158h1v1h-1zM650 0h1v1h-1zM650 15h1v1h-1zM650 31h1v1h-1zM650 47h1v1h-1zM650 63h1v1h-1zM650 79h1v1h-1zM650 94h1v1h-1zM650 110h1v1h-1zM650 126h1v1h-1zM650 142h1v1h-1zM650 158h1v1h-1zM657 0h1v1h-1zM657 5h1v1h-1zM657 10h1v1h-1zM657 15h1v1h-1zM657 21h1v1h-1zM657 26h1v1h-1zM657 31h1v1h-1zM657 36h1v1h-1zM657 42h1v1h-1zM657 47h1v1h-1zM657 52h1v1h-1zM657 57h1v1h-1zM657 63h1v1h-1zM657 68h1v1h-1zM657 73h1v1h-1zM657 79h1v1h-1zM657 84h1v1h-1zM657 89h1v1h-1zM657 94h1v1h-1zM657 100h1v1h-1zM657 105h1v1h-1zM657 110h1v1h-1zM657 115h1v1h-1zM657 121h1v1h-1zM657 126h1v1h-1zM657 131h1v1h-1zM657 136h1v1h-1zM657 142h1v1h-1zM657 147h1v1h-1zM657 152h1v1h-1zM657 158h1v1h-1zM665 0h1v1h-1zM665 15h1v1h-1zM665 31h1v1h-1zM665 47h1v1h-1zM665 63h1v1h-1zM665 79h1v1h-1zM665 94h1v1h-1zM665 110h1v1h-1zM665 126h1v1h-1zM665 142h1v1h-1zM665 158h1v1h-1zM672 0h1v1h-1zM672 15h1v1h-1zM672 31h1v1h-1zM672 47h1v1h-1zM672 63h1v1h-1zM672 79h1v1h-1zM672 94h1v1h-1zM672 110h1v1h-1zM672 126h1v1h-1zM672 142h1v1h-1zM672 158h1v1h-1zM679 0h1v1h-1zM679 15h1v1h-1zM679 31h1v1h-1zM679 47h1v1h-1zM679 63h1v1h-1zM679 79h1v1h-1zM679 94h1v1h-1zM679 110h1v1h-1zM679 126h1v1h-1zM679 142h1v1h-1zM679 158h1v1h-1zM687 0h1v1h-1zM687 15h1v1h-1zM687 31h1v1h-1zM687 47h1v1h-1zM687 63h1v1h-1zM687 79h1v1h-1zM687 94h1v1h-1zM687 110h1v1h-1zM687 126h1v1h-1zM687 142h1v1h-1zM687 158h1v1h-1zM694 0h1v1h-1zM694 15h1v1h-1zM694 31h1v1h-1zM694 47h1v1h-1zM694 63h1v1h-1zM694 79h1v1h-1zM694 94h1v1h-1zM694 110h1v1h-1zM694 126h1v1h-1zM694 142h1v1h-1zM694 158h1v1h-1zM701 0h1v1h-1zM701 15h1v1h-1zM701 31h1v1h-1zM701 47h1v1h-1zM701 63h1v1h-1zM701 79h1v1h-1zM701 94h1v1h-1zM701 110h1v1h-1zM701 126h1v1h-1zM701 142h1v1h-1zM701 158h1v1h-1zM709 0h1v1h-1zM709 15h1v1h-1zM709 31h1v1h-1zM709 47h1v1h-1zM709 63h1v1h-1zM709 79h1v1h-1zM709 94h1v1h-1zM709 110h1v1h-1zM709 126h1v1h-1zM709 142h1v1h-1zM709 158h1v1h-1zM716 0h1v1h-1zM716 15h1v1h-1zM716 31h1v1h-1zM716 47h1v1h-1zM716 63h1v1h-1zM716 79h1v1h-1zM716 94h1v1h-1zM716 110h1v1h-1zM716 126h1v1h-1zM716 142h1v1h-1zM716 158h1v1h-1zM723 0h1v1h-1zM723 15h1v1h-1zM723 31h1v1h-1zM723 47h1v1h-1zM723 63h1v1h-1zM723 79h1v1h-1zM723 94h1v1h-1zM723 110h1v1h-1zM723 126h1v1h-1zM723 142h1v1h-1zM723 158h1v1h-1zM731 0h1v1h-1zM731 5h1v1h-1zM731 10h1v1h-1zM731 15h1v1h-1zM731 21h1v1h-1zM731 26h1v1h-1zM731 31h1v1h-1zM731 36h1v1h-1zM731 42h1v1h-1zM731 47h1v1h-1zM731 52h1v1h-1zM731 57h1v1h-1zM731 63h1v1h-1zM731 68h1v1h-1zM731 73h1v1h-1zM731 79h1v1h-1zM731 84h1v1h-1zM731 89h1v1h-1zM731 94h1v1h-1zM731 100h1v1h-1zM731 105h1v1h-1zM731 110h1v1h-1zM731 115h1v1h-1zM731 121h1v1h-1zM731 126h1v1h-1zM731 131h1v1h-1zM731 136h1v1h-1zM731 142h1v1h-1zM731 147h1v1h-1zM731 152h1v1h-1zM731 158h1v1h-1z" fill="#fff"/><text x="0" y="0" transform="translate(4.96 23.80) scale(1.0136 1)" fill="#ffc8c8" font-family="Liberation Sans" font-size="13.5" shape-rendering="auto">X-vel</text><text x="0" y="0" transform="translate(4.57 42.60) scale(1.0751 1)" fill="#ffc8c8" font-family="Liberation Sans" font-size="13.5" shape-rendering="auto">20m/div</text><text x="0" y="0" transform="translate(4.87 79.60) scale(1.0630 1)" fill="#dca000" font-family="Liberation Sans" font-size="13.5" shape-rendering="auto">stepgen.0.dir</text><text x="0" y="0" transform="translate(4.22 98.90) scale(1.0646 1)" fill="#dca000" font-family="Liberation Sans" font-size="13.5" shape-rendering="auto">1&#160;/div</text><text x="0" y="0" transform="translate(4.87 156.90) scale(1.0695 1)" fill="#00cc33" font-family="Liberation Sans" font-size="13.5" shape-rendering="auto">stepgen.0.step</text><rect x="0" y="45" width="732" height="2" fill="#fff"/><rect x="0" y="81" width="335" height="2" fill="#999"/><path d="M0 66 H335 L336 82 H732" stroke="#dca000" stroke-width="2" fill="none" shape-rendering="auto"/><rect x="0" y="141" width="732" height="2" fill="#00cc33"/><path d="M5.1 143 L6.1 126 L8.1 126 L9.1 143 Z M15.1 143 L16.1 126 L18.1 126 L19.1 143 Z M26.0 143 L27.0 126 L29.0 126 L30.0 143 Z M36.6 143 L37.6 126 L39.6 126 L40.6 143 Z M49.6 143 L49.8 126 L51.8 126 L52.6 143 Z M60.4 143 L61.4 126 L63.4 126 L64.4 143 Z M73.6 143 L73.8 126 L75.8 126 L76.6 143 Z M86.5 143 L86.7 126 L88.7 126 L89.5 143 Z M100.5 143 L100.7 126 L102.7 126 L103.5 143 Z M115.1 143 L115.3 126 L117.3 126 L118.1 143 Z M130.5 143 L130.7 126 L132.7 126 L133.5 143 Z M148.3 143 L148.5 126 L150.5 126 L151.3 143 Z M166.5 143 L166.7 126 L168.7 126 L169.5 143 Z M186.9 143 L187.1 126 L189.1 126 L189.9 143 Z M211.7 143 L211.9 126 L213.9 126 L214.7 143 Z M241.2 143 L241.4 126 L243.4 126 L244.2 143 Z M285.1 143 L285.3 126 L287.3 126 L288.1 143 Z M397.5 143 L397.7 126 L399.7 126 L400.5 143 Z M440.7 143 L440.9 126 L442.9 126 L443.7 143 Z M470.5 143 L470.7 126 L472.7 126 L473.5 143 Z M495.5 143 L495.7 126 L497.7 126 L498.5 143 Z M515.8 143 L516.0 126 L518.0 126 L518.8 143 Z M534.0 143 L534.2 126 L536.2 126 L537.0 143 Z M550.8 143 L551.0 126 L553.0 126 L553.8 143 Z M567.1 143 L567.3 126 L569.3 126 L570.1 143 Z M582.0 143 L582.2 126 L584.2 126 L585.0 143 Z M595.8 143 L596.0 126 L598.0 126 L598.8 143 Z M608.8 143 L609.0 126 L611.0 126 L611.8 143 Z M620.8 143 L621.0 126 L623.0 126 L623.8 143 Z M632.9 143 L633.1 126 L635.1 126 L635.9 143 Z M644.0 143 L645.0 126 L647.0 126 L648.0 143 Z M655.1 143 L656.1 126 L658.1 126 L659.1 143 Z M665.0 143 L666.0 126 L668.0 126 L669.0 143 Z M676.0 143 L677.0 126 L679.0 126 L680.0 143 Z M685.7 143 L686.7 126 L688.7 126 L689.7 143 Z M695.5 143 L696.5 126 L698.5 126 L699.5 143 Z M705.4 143 L706.4 126 L708.4 126 L709.4 143 Z M714.3 143 L715.3 126 L717.3 126 L718.3 143 Z M723.9 143 L724.9 126 L726.9 126 L727.9 143 Z " fill="#00cc33" shape-rendering="auto"/><path d="M-7.7 161 L11.8 161 L12.8 156 L26.5 156 L27.5 151 L41.2 151 L42.2 146 L55.8 146 L56.8 141 L70.5 141 L71.5 136 L85.2 136 L86.2 131 L99.8 131 L100.8 126 L114.5 126 L115.5 121 L129.2 121 L130.2 116 L143.8 116 L144.8 111 L158.5 111 L159.5 106 L173.2 106 L174.2 101 L187.8 101 L188.8 96 L202.5 96 L203.5 91 L217.2 91 L218.2 86 L231.8 86 L232.8 81 L246.5 81 L247.5 76 L261.2 76 L262.2 71 L275.8 71 L276.8 66 L290.5 66 L291.5 61 L305.2 61 L306.2 56 L319.8 56 L320.8 51 L334.5 51 L335.5 46 L349.2 46 L350.2 41 L363.8 41 L364.8 36 L378.5 36 L379.5 31 L393.2 31 L394.2 26 L407.8 26 L408.8 21 L422.5 21 L423.5 16 L437.2 16 L438.2 11 L451.8 11 L452.8 6 L466.5 6 L467.5 1 L481.2 1 L482.2 -4 L495.8 -4 L496.8 -9 " stroke="#ffc8c8" stroke-width="2" fill="none"/><circle cx="234.7" cy="81.5" r="5" fill="#ffc8c8" shape-rendering="auto"/></svg><div class="b" style="left:6px;top:337px;width:44px;height:36px;border:2px solid #111;border-radius:5px;box-sizing:border-box;background:#cc0000;"></div><div class="t" style="left:24.05px;top:349.00px;font-size:13.5px;line-height:13.5px;color:#2e3436;font-family:'Liberation Sans', sans-serif;">1</div><div class="b" style="left:52px;top:337px;width:44px;height:36px;border:2px solid #cbc5bf;border-radius:5px;box-sizing:border-box;background:linear-gradient(#f8f7f6,#edebe9);box-shadow:inset 0 1px rgba(255,255,255,0.9), 0 1px rgba(0,0,0,0.04);"></div><div class="t" style="left:70.25px;top:349.00px;font-size:13.5px;line-height:13.5px;color:#2e3436;font-family:'Liberation Sans', sans-serif;">2</div><div class="b" style="left:98px;top:337px;width:44px;height:36px;border:2px solid #cbc5bf;border-radius:5px;box-sizing:border-box;background:linear-gradient(#f8f7f6,#edebe9);box-shadow:inset 0 1px rgba(255,255,255,0.9), 0 1px rgba(0,0,0,0.04);"></div><div class="t" style="left:116.25px;top:349.00px;font-size:13.5px;line-height:13.5px;color:#2e3436;font-family:'Liberation Sans', sans-serif;">3</div><div class="b" style="left:144px;top:337px;width:44px;height:36px;border:2px solid #cbc5bf;border-radius:5px;box-sizing:border-box;background:linear-gradient(#f8f7f6,#edebe9);box-shadow:inset 0 1px rgba(255,255,255,0.9), 0 1px rgba(0,0,0,0.04);"></div><div class="t" style="left:162.32px;top:349.00px;font-size:13.5px;line-height:13.5px;color:#2e3436;font-family:'Liberation Sans', sans-serif;">4</div><div class="b" style="left:190px;top:337px;width:44px;height:36px;border:2px solid #d6cfc9;border-radius:5px;box-sizing:border-box;background:#cc9900;"></div><div class="t" style="left:208.25px;top:349.00px;font-size:13.5px;line-height:13.5px;color:#2e3436;font-family:'Liberation Sans', sans-serif;">5</div><div class="b" style="left:235px;top:337px;width:44px;height:36px;border:2px solid #d6cfc9;border-radius:5px;box-sizing:border-box;background:#00cc33;"></div><div class="t" style="left:253.19px;top:349.00px;font-size:13.5px;line-height:13.5px;color:#2e3436;font-family:'Liberation Sans', sans-serif;">6</div><div class="b" style="left:281px;top:337px;width:44px;height:36px;border:2px solid #cbc5bf;border-radius:5px;box-sizing:border-box;background:linear-gradient(#f8f7f6,#edebe9);box-shadow:inset 0 1px rgba(255,255,255,0.9), 0 1px rgba(0,0,0,0.04);"></div><div class="t" style="left:299.25px;top:349.00px;font-size:13.5px;line-height:13.5px;color:#2e3436;font-family:'Liberation Sans', sans-serif;">7</div><div class="b" style="left:327px;top:337px;width:44px;height:36px;border:2px solid #cbc5bf;border-radius:5px;box-sizing:border-box;background:linear-gradient(#f8f7f6,#edebe9);box-shadow:inset 0 1px rgba(255,255,255,0.9), 0 1px rgba(0,0,0,0.04);"></div><div class="t" style="left:345.22px;top:349.00px;font-size:13.5px;line-height:13.5px;color:#2e3436;font-family:'Liberation Sans', sans-serif;">8</div><div class="b" style="left:373px;top:337px;width:44px;height:36px;border:2px solid #cbc5bf;border-radius:5px;box-sizing:border-box;background:linear-gradient(#f8f7f6,#edebe9);box-shadow:inset 0 1px rgba(255,255,255,0.9), 0 1px rgba(0,0,0,0.04);"></div><div class="t" style="left:391.25px;top:349.00px;font-size:13.5px;line-height:13.5px;color:#2e3436;font-family:'Liberation Sans', sans-serif;">9</div><div class="b" style="left:419px;top:337px;width:44px;height:36px;border:2px solid #cbc5bf;border-radius:5px;box-sizing:border-box;background:linear-gradient(#f8f7f6,#edebe9);box-shadow:inset 0 1px rgba(255,255,255,0.9), 0 1px rgba(0,0,0,0.04);"></div><div class="t" style="left:433.24px;top:349.00px;font-size:13.5px;line-height:13.5px;color:#2e3436;font-family:'Liberation Sans', sans-serif;">10</div><div class="b" style="left:464px;top:337px;width:44px;height:36px;border:2px solid #cbc5bf;border-radius:5px;box-sizing:border-box;background:linear-gradient(#f8f7f6,#edebe9);box-shadow:inset 0 1px rgba(255,255,255,0.9), 0 1px rgba(0,0,0,0.04);"></div><div class="t" style="left:478.81px;top:349.00px;font-size:13.5px;line-height:13.5px;color:#2e3436;font-family:'Liberation Sans', sans-serif;">11</div><div class="b" style="left:510px;top:337px;width:44px;height:36px;border:2px solid #cbc5bf;border-radius:5px;box-sizing:border-box;background:linear-gradient(#f8f7f6,#edebe9);box-shadow:inset 0 1px rgba(255,255,255,0.9), 0 1px rgba(0,0,0,0.04);"></div><div class="t" style="left:524.34px;top:349.00px;font-size:13.5px;line-height:13.5px;color:#2e3436;font-family:'Liberation Sans', sans-serif;">12</div><div class="b" style="left:556px;top:337px;width:44px;height:36px;border:2px solid #cbc5bf;border-radius:5px;box-sizing:border-box;background:linear-gradient(#f8f7f6,#edebe9);box-shadow:inset 0 1px rgba(255,255,255,0.9), 0 1px rgba(0,0,0,0.04);"></div><div class="t" style="left:570.27px;top:349.00px;font-size:13.5px;line-height:13.5px;color:#2e3436;font-family:'Liberation Sans', sans-serif;">13</div><div class="b" style="left:602px;top:337px;width:44px;height:36px;border:2px solid #cbc5bf;border-radius:5px;box-sizing:border-box;background:linear-gradient(#f8f7f6,#edebe9);box-shadow:inset 0 1px rgba(255,255,255,0.9), 0 1px rgba(0,0,0,0.04);"></div><div class="t" style="left:616.20px;top:349.00px;font-size:13.5px;line-height:13.5px;color:#2e3436;font-family:'Liberation Sans', sans-serif;">14</div><div class="b" style="left:648px;top:337px;width:44px;height:36px;border:2px solid #cbc5bf;border-radius:5px;box-sizing:border-box;background:linear-gradient(#f8f7f6,#edebe9);box-shadow:inset 0 1px rgba(255,255,255,0.9), 0 1px rgba(0,0,0,0.04);"></div><div class="t" style="left:662.27px;top:349.00px;font-size:13.5px;line-height:13.5px;color:#2e3436;font-family:'Liberation Sans', sans-serif;">15</div><div class="b" style="left:693px;top:337px;width:44px;height:36px;border:2px solid #cbc5bf;border-radius:5px;box-sizing:border-box;background:linear-gradient(#f8f7f6,#edebe9);box-shadow:inset 0 1px rgba(255,255,255,0.9), 0 1px rgba(0,0,0,0.04);"></div><div class="t" style="left:707.27px;top:349.00px;font-size:13.5px;line-height:13.5px;color:#2e3436;font-family:'Liberation Sans', sans-serif;">16</div><div class="b" style="left:6px;top:385px;width:732px;height:45px;border:1px solid #ffffff;box-sizing:border-box;"></div><div class="b" style="left:5px;top:384px;width:732px;height:45px;border:1px solid #d3cdc8;box-sizing:border-box;"></div><div class="b" style="left:6px;top:382px;width:105.6px;height:5px;background:#f6f5f4;"></div><div class="t" style="left:4.89px;top:378.00px;font-size:13.5px;line-height:13.5px;color:#2e3436;font-family:'Liberation Sans', sans-serif;">Selected&#160;Channel</div><div class="t" style="left:15.95px;top:405.00px;font-size:13.5px;line-height:13.5px;color:#2e3436;font-family:'Liberation Sans', sans-serif;">1</div><div class="b" style="left:35px;top:394px;width:1px;height:34px;background:#d3cdc8;"></div><div class="b" style="left:42px;top:394px;width:363px;height:34px;border:1px solid #cdc7c2;border-radius:5px;box-sizing:border-box;background:linear-gradient(#f8f7f6,#edebe9);box-shadow:inset 0 1px rgba(255,255,255,0.9), 0 1px rgba(0,0,0,0.04);"></div><div class="t" style="left:207.66px;top:405.00px;font-size:13.5px;line-height:13.5px;color:#2e3436;font-family:'Liberation Sans', sans-serif;transform:scaleX(1.0170);">X-vel</div><div class="t" style="left:408.33px;top:405.15px;font-size:14px;line-height:14px;color:#2e3436;font-family:'Liberation Mono', monospace;-webkit-text-stroke:0;transform:scaleX(0.9566);">f(-0.00690)&#160;=&#160;-0.04397&#160;(ddt&#160;&#160;0.00000)</div><div class="b" style="left:740px;top:71px;width:76px;height:103px;border:1px solid #ffffff;box-sizing:border-box;"></div><div class="b" style="left:739px;top:70px;width:76px;height:103px;border:1px solid #d3cdc8;box-sizing:border-box;"></div><div class="b" style="left:740px;top:68px;width:62px;height:5px;background:#f6f5f4;"></div><div class="t" style="left:738.81px;top:64.00px;font-size:13.5px;line-height:13.5px;color:#2e3436;font-family:'Liberation Sans', sans-serif;transform:scaleX(1.0080);">Run&#160;Mode</div><div class="b" style="left:744px;top:83px;width:16px;height:16px;border-radius:50%;background:#3584e4;"></div><div class="b" style="left:748px;top:87px;width:8px;height:8px;border-radius:50%;background:#fff;"></div><div class="t" style="left:763.22px;top:86.00px;font-size:13.5px;line-height:13.5px;color:#2e3436;font-family:'Liberation Sans', sans-serif;transform:scaleX(1.0961);">Normal</div><div class="b" style="left:744px;top:106px;width:16px;height:16px;border-radius:50%;background:#fff;border:1px solid #b6ada5;box-sizing:border-box;"></div><div class="t" style="left:763.80px;top:109.00px;font-size:13.5px;line-height:13.5px;color:#2e3436;font-family:'Liberation Sans', sans-serif;transform:scaleX(0.9803);">Single</div><div class="b" style="left:744px;top:129px;width:16px;height:16px;border-radius:50%;background:#fff;border:1px solid #b6ada5;box-sizing:border-box;"></div><div class="t" style="left:763.30px;top:132.00px;font-size:13.5px;line-height:13.5px;color:#2e3436;font-family:'Liberation Sans', sans-serif;transform:scaleX(1.0159);">Roll</div><div class="b" style="left:744px;top:152px;width:16px;height:16px;border-radius:50%;background:#fff;border:1px solid #b6ada5;box-sizing:border-box;"></div><div class="t" style="left:763.79px;top:155.00px;font-size:13.5px;line-height:13.5px;color:#2e3436;font-family:'Liberation Sans', sans-serif;transform:scaleX(1.0115);">Stop</div><div class="b" style="left:819px;top:71px;width:81px;height:359px;border:1px solid #ffffff;box-sizing:border-box;"></div><div class="b" style="left:818px;top:70px;width:81px;height:359px;border:1px solid #d3cdc8;box-sizing:border-box;"></div><div class="b" style="left:819px;top:68px;width:44.60000000000002px;height:5px;background:#f6f5f4;"></div><div class="t" style="left:817.91px;top:64.00px;font-size:13.5px;line-height:13.5px;color:#2e3436;font-family:'Liberation Sans', sans-serif;transform:scaleX(1.0626);">Trigger</div><div class="b" style="left:823px;top:83px;width:16px;height:16px;border-radius:50%;background:#3584e4;"></div><div class="b" style="left:827px;top:87px;width:8px;height:8px;border-radius:50%;background:#fff;"></div><div class="t" style="left:842.22px;top:86.00px;font-size:13.5px;line-height:13.5px;color:#2e3436;font-family:'Liberation Sans', sans-serif;transform:scaleX(1.0888);">Normal</div><div class="b" style="left:823px;top:106px;width:16px;height:16px;border-radius:50%;background:#fff;border:1px solid #b6ada5;box-sizing:border-box;"></div><div class="t" style="left:843.40px;top:109.00px;font-size:13.5px;line-height:13.5px;color:#2e3436;font-family:'Liberation Sans', sans-serif;transform:scaleX(1.0587);">Auto</div><div class="b" style="left:819px;top:126px;width:79px;height:34px;border:1px solid #cdc7c2;border-radius:5px;box-sizing:border-box;background:linear-gradient(#f8f7f6,#edebe9);box-shadow:inset 0 1px rgba(255,255,255,0.9), 0 1px rgba(0,0,0,0.04);"></div><div class="t" style="left:840.43px;top:136.00px;font-size:13.5px;line-height:13.5px;color:#2e3436;font-family:'Liberation Sans', sans-serif;transform:scaleX(0.9938);">Force</div><div class="t" style="left:821.85px;top:164.00px;font-size:13.5px;line-height:13.5px;color:#2e3436;font-family:'Liberation Sans', sans-serif;transform:scaleX(1.0657);">Level</div><div class="t" style="left:866.11px;top:164.00px;font-size:13.5px;line-height:13.5px;color:#2e3436;font-family:'Liberation Sans', sans-serif;transform:scaleX(1.0122);">Pos</div><div class="b" style="left:837px;top:191px;width:4px;height:52px;background:#3584e4;border:1px solid #1b6acb;border-radius:2px;box-sizing:border-box;"></div><div class="b" style="left:837px;top:243px;width:4px;height:46px;background:#e1dedb;border:1px solid #c6c0ba;border-radius:2px;box-sizing:border-box;"></div><div class="b" style="left:829px;top:229px;width:20px;height:20px;border-radius:50%;background:linear-gradient(#ffffff,#f6f5f4);border:1px solid #b6ada5;box-sizing:border-box;"></div><div class="b" style="left:876px;top:191px;width:4px;height:52px;background:#3584e4;border:1px solid #1b6acb;border-radius:2px;box-sizing:border-box;"></div><div class="b" style="left:876px;top:243px;width:4px;height:46px;background:#e1dedb;border:1px solid #c6c0ba;border-radius:2px;box-sizing:border-box;"></div><div class="b" style="left:868px;top:229px;width:20px;height:20px;border-radius:50%;background:linear-gradient(#ffffff,#f6f5f4);border:1px solid #b6ada5;box-sizing:border-box;"></div><div class="b" style="left:819px;top:305px;width:79px;height:1px;background:#d3cdc8;"></div><div class="t" style="left:841.49px;top:312.00px;font-size:13.5px;line-height:13.5px;color:#2e3436;font-family:'Liberation Sans', sans-serif;transform:scaleX(1.0261);">Level</div><div class="t" style="left:839.92px;top:331.00px;font-size:13.5px;line-height:13.5px;color:#2e3436;font-family:'Liberation Sans', sans-serif;transform:scaleX(1.0661);">0.000</div><div class="b" style="left:819px;top:347px;width:79px;height:33px;border:1px solid #cdc7c2;border-radius:5px;box-sizing:border-box;background:linear-gradient(#f8f7f6,#edebe9);box-shadow:inset 0 1px rgba(255,255,255,0.9), 0 1px rgba(0,0,0,0.04);"></div><div class="t" style="left:839.43px;top:357.00px;font-size:13.5px;line-height:13.5px;color:#2e3436;font-family:'Liberation Sans', sans-serif;transform:scaleX(0.9895);">Rising</div><div class="b" style="left:819px;top:381px;width:79px;height:47px;border:1px solid #cdc7c2;border-radius:5px;box-sizing:border-box;background:linear-gradient(#f8f7f6,#edebe9);box-shadow:inset 0 1px rgba(255,255,255,0.9), 0 1px rgba(0,0,0,0.04);"></div><div class="t" style="left:835.70px;top:389.00px;font-size:13.5px;line-height:13.5px;color:#2e3436;font-family:'Liberation Sans', sans-serif;transform:scaleX(0.9852);">Source</div><div class="t" style="left:835.66px;top:408.00px;font-size:13.5px;line-height:13.5px;color:#2e3436;font-family:'Liberation Sans', sans-serif;transform:scaleX(0.9536);">Chan&#160;&#160;3</div><div class="b" style="left:740px;top:184px;width:76px;height:246px;border:1px solid #ffffff;box-sizing:border-box;"></div><div class="b" style="left:739px;top:183px;width:76px;height:246px;border:1px solid #d3cdc8;box-sizing:border-box;"></div><div class="b" style="left:740px;top:181px;width:45.799999999999955px;height:5px;background:#f6f5f4;"></div><div class="t" style="left:738.53px;top:177.00px;font-size:13.5px;line-height:13.5px;color:#2e3436;font-family:'Liberation Sans', sans-serif;transform:scaleX(1.0678);">Vertical</div><div class="t" style="left:743.71px;top:197.00px;font-size:13.5px;line-height:13.5px;color:#2e3436;font-family:'Liberation Sans', sans-serif;transform:scaleX(1.0174);">Gain</div><div class="t" style="left:783.74px;top:197.00px;font-size:13.5px;line-height:13.5px;color:#2e3436;font-family:'Liberation Sans', sans-serif;transform:scaleX(0.9846);">Pos</div><div class="b" style="left:756px;top:224px;width:4px;height:45.5px;background:#3584e4;border:1px solid #1b6acb;border-radius:2px;box-sizing:border-box;"></div><div class="b" style="left:756px;top:269.5px;width:4px;height:53.5px;background:#e1dedb;border:1px solid #c6c0ba;border-radius:2px;box-sizing:border-box;"></div><div class="b" style="left:748px;top:255.5px;width:20px;height:20px;border-radius:50%;background:linear-gradient(#ffffff,#f6f5f4);border:1px solid #b6ada5;box-sizing:border-box;"></div><div class="b" style="left:793px;top:224px;width:4px;height:32.5px;background:#3584e4;border:1px solid #1b6acb;border-radius:2px;box-sizing:border-box;"></div><div class="b" style="left:793px;top:256.5px;width:4px;height:66.5px;background:#e1dedb;border:1px solid #c6c0ba;border-radius:2px;box-sizing:border-box;"></div><div class="b" style="left:785px;top:242.5px;width:20px;height:20px;border-radius:50%;background:linear-gradient(#ffffff,#f6f5f4);border:1px solid #b6ada5;box-sizing:border-box;"></div><div class="b" style="left:740px;top:338px;width:74px;height:1px;background:#d3cdc8;"></div><div class="t" style="left:760.95px;top:346.00px;font-size:13.5px;line-height:13.5px;color:#2e3436;font-family:'Liberation Sans', sans-serif;transform:scaleX(0.9129);">Scale</div><div class="t" style="left:750.47px;top:365.00px;font-size:13.5px;line-height:13.5px;color:#2e3436;font-family:'Liberation Sans', sans-serif;transform:scaleX(1.0794);">20m/div</div><div class="b" style="left:740px;top:380px;width:74px;height:48px;border:1px solid #cdc7c2;border-radius:5px;box-sizing:border-box;background:linear-gradient(#f8f7f6,#edebe9);box-shadow:inset 0 1px rgba(255,255,255,0.9), 0 1px rgba(0,0,0,0.04);"></div><div class="t" style="left:758.07px;top:389.00px;font-size:13.5px;line-height:13.5px;color:#2e3436;font-family:'Liberation Sans', sans-serif;transform:scaleX(1.0333);">Offset</div><div class="t" style="left:758.13px;top:407.00px;font-size:13.5px;line-height:13.5px;color:#2e3436;font-family:'Liberation Sans', sans-serif;transform:scaleX(1.0599);">0.000</div><svg class="b" style="left:0;top:0" width="904" height="30">
<defs><linearGradient id="wg" x1="0" y1="0" x2="0" y2="1"><stop offset="0" stop-color="#fff"/><stop offset="1" stop-color="#dcdcd8"/></linearGradient></defs>
<g stroke="#2e3436" stroke-width="2" fill="none">
<path d="M815.5 18.5 L819.6 13.5 L823.7 18.5"/>
<path d="M838 18.7 H847"/>
<rect x="862" y="12" width="7.5" height="7"/>
<path d="M884.5 11.5 L892.5 19.5 M892.5 11.5 L884.5 19.5"/>
</g>
<rect x="6.5" y="7" width="19" height="16.5" rx="2" fill="url(#wg)" stroke="#a8a8a8"/>
<rect x="7" y="7.5" width="18" height="2.2" fill="#4a78c0"/>
</svg><div class="b" style="left:0;top:0;width:904px;height:434px;border:1px solid #3c3c3c;border-radius:5px 5px 0 0;box-sizing:border-box;"></div>
</body></html>
